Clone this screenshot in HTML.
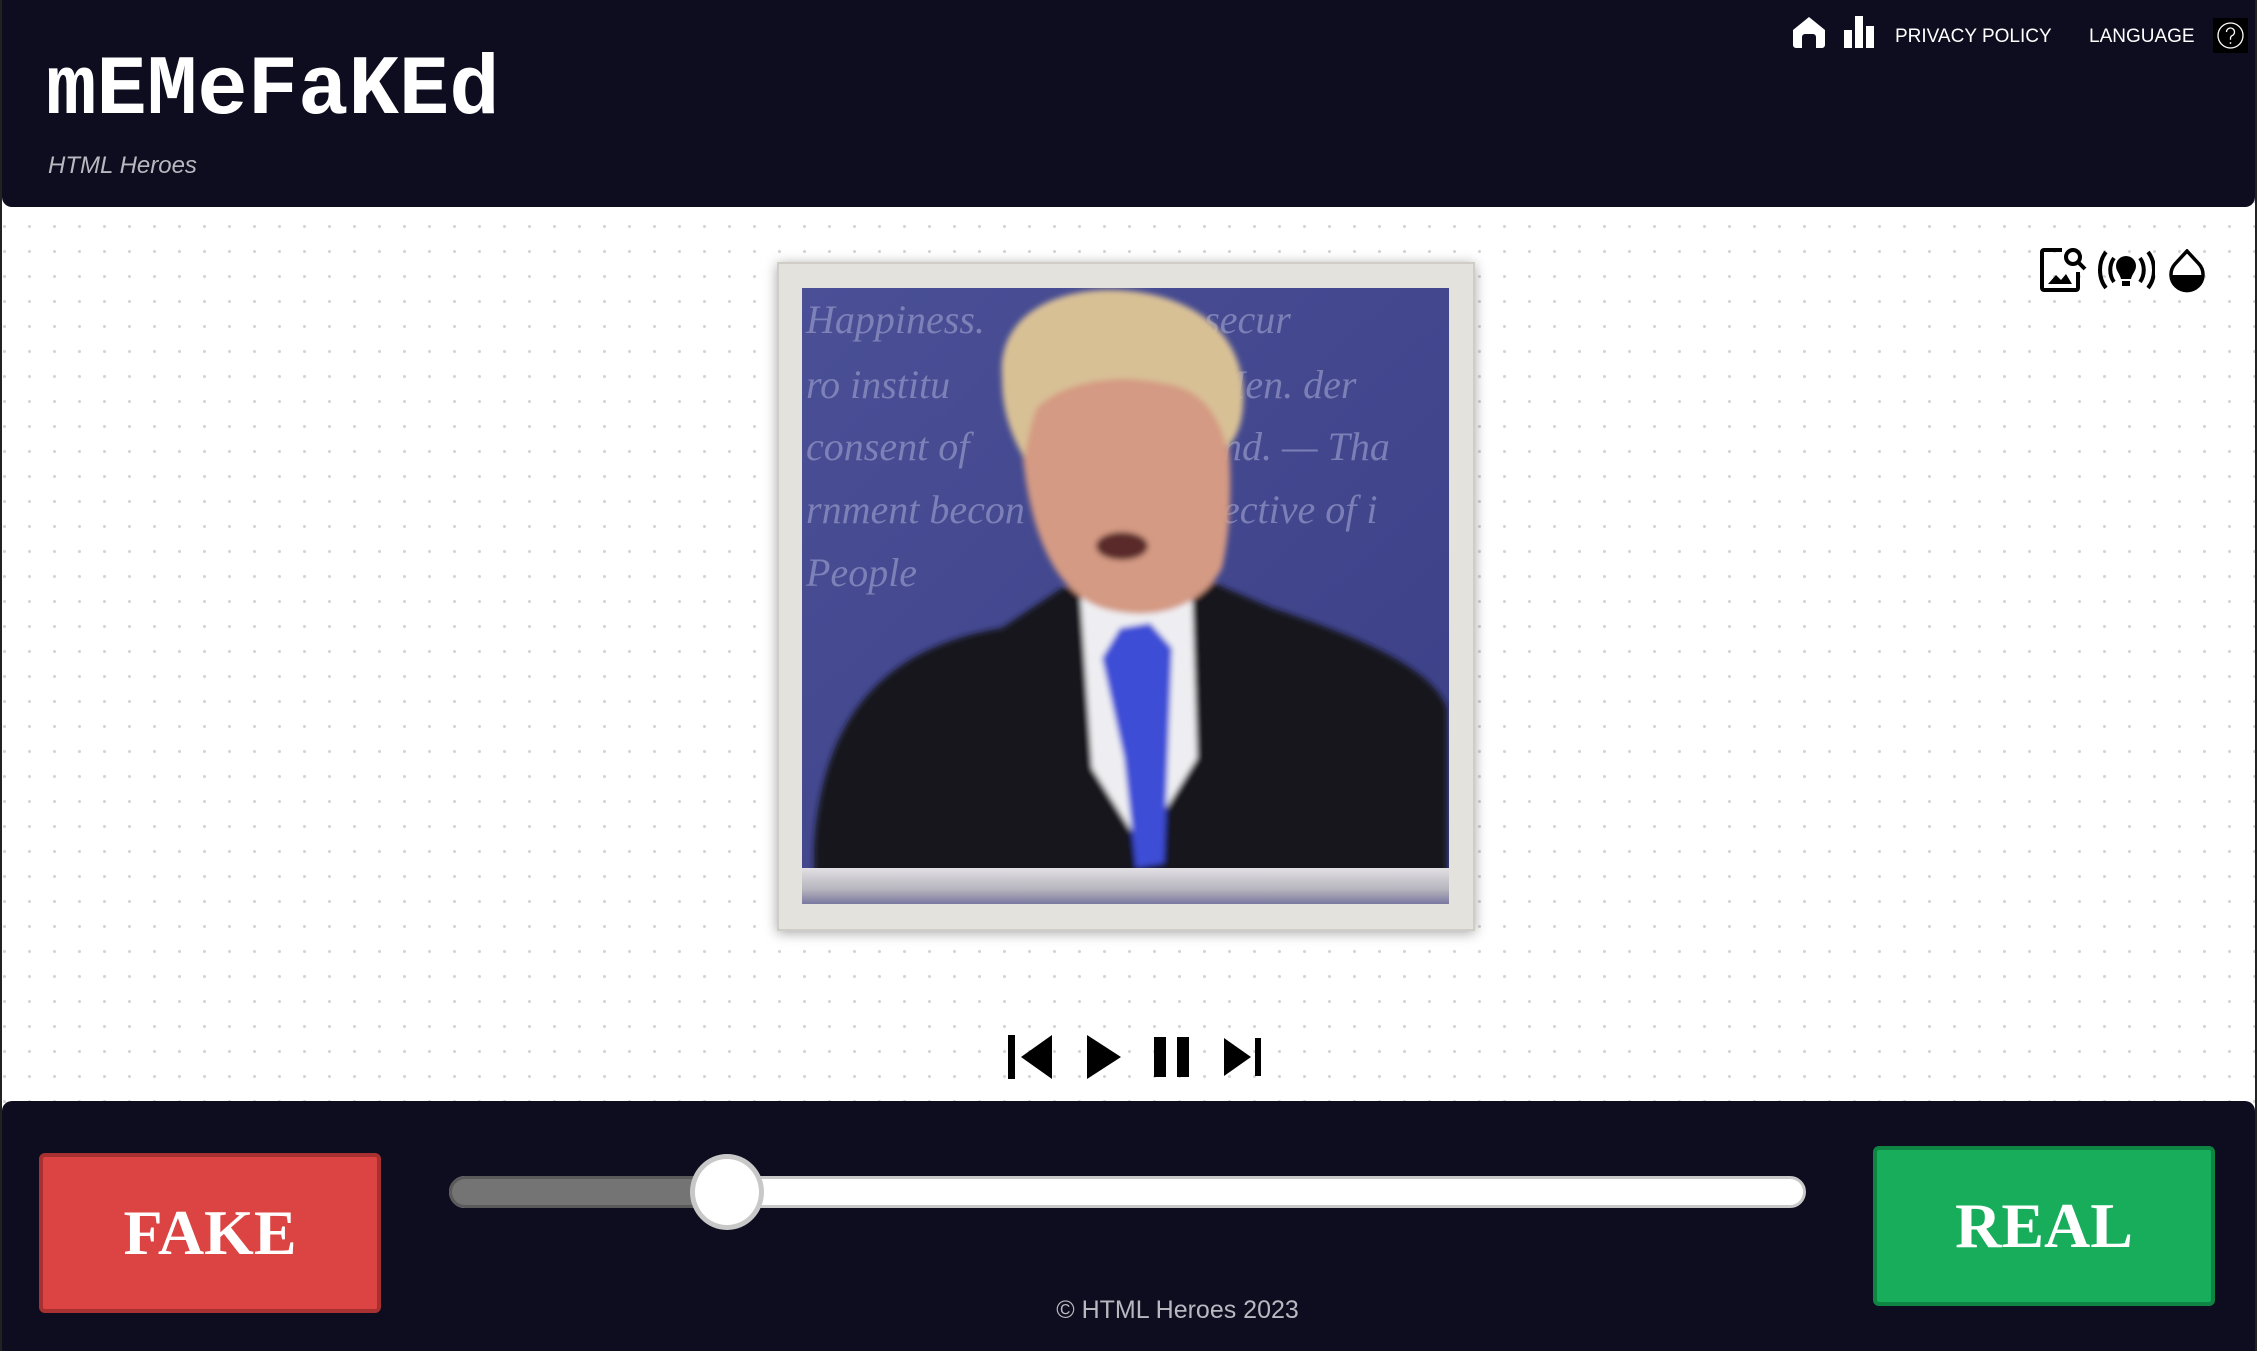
<!DOCTYPE html>
<html><head><meta charset="utf-8"><style>
*{margin:0;padding:0;box-sizing:border-box}
html,body{width:2257px;height:1351px;overflow:hidden;background:#fff;font-family:"Liberation Sans",sans-serif}
.main{position:absolute;left:0;top:0;width:2257px;height:1351px;border-left:2px solid #222;border-right:2px solid #222;
background-color:#fff;background-image:radial-gradient(circle,#d4d4d4 1.3px,transparent 1.8px);background-size:25px 25px;background-position:-10px -11px}
header{position:absolute;left:2px;top:0;width:2253px;height:207px;background:#0d0d1f;border-radius:0 0 10px 10px}
.title{position:absolute;left:44px;top:44px;font-family:"Liberation Mono",monospace;font-weight:bold;font-size:84px;color:#fff;letter-spacing:0}
.sub{position:absolute;left:46px;top:152px;font-style:italic;font-size:24px;color:#b8b8c0}
.nav{position:absolute;top:26px;font-size:19px;color:#fff;letter-spacing:0}
footer{position:absolute;left:2px;top:1101px;width:2253px;height:250px;background:#0d0d1f;border-radius:10px 10px 0 0}
.btn{position:absolute;font-family:"Liberation Serif",serif;font-weight:bold;color:#fff;font-size:64px;display:flex;align-items:center;justify-content:center;border-radius:6px}
.fake{left:39px;top:1153px;width:342px;height:160px;background:#dc4343;border:4px solid #a93030}
.real{left:1873px;top:1146px;width:342px;height:160px;background:#17ad5a;border:4px solid #0f8543}
.track{position:absolute;left:449px;top:1176px;width:1357px;height:32px;border-radius:16px;background:#fff;border:3px solid #c8c8c8}
.fill{position:absolute;left:449px;top:1176px;width:290px;height:32px;border-radius:16px 0 0 16px;background:#747474;border:3px solid #5a5a5a;border-right:none}
.thumb{position:absolute;left:690px;top:1154px;width:74px;height:76px;border-radius:50%;background:#fff;border:5px solid #c8c8c8}
.copy{position:absolute;left:1055px;width:245px;text-align:center;top:1296px;font-size:25px;color:#b8b8c0;white-space:nowrap}
.frame{position:absolute;left:777px;top:262px;width:698px;height:669px;background:#e4e2dc;border:2px solid #cfcdc6;box-shadow:0 2px 12px rgba(0,0,0,.35)}
</style></head><body>
<div class="main"></div>
<header>
<div class="title">mEMeFaKEd</div>
<div class="sub">HTML Heroes</div>
<svg style="position:absolute;left:1790px;top:16px" width="34" height="32" viewBox="0 0 34 32"><path d="M17 1 L33 14 V29 a3 3 0 0 1-3 3 H24 V21 a3 3 0 0 0-3-3 H13 a3 3 0 0 0-3 3 V32 H4 a3 3 0 0 1-3-3 V14 Z" fill="#fff"/></svg>
<svg style="position:absolute;left:1842px;top:16px" width="30" height="32" viewBox="0 0 30 32"><rect x="0" y="14" width="8" height="18" fill="#fff"/><rect x="11" y="0" width="8" height="32" fill="#fff"/><rect x="22" y="10" width="8" height="22" fill="#fff"/></svg>
<div class="nav" style="left:1893px">PRIVACY POLICY</div>
<div class="nav" style="left:2087px">LANGUAGE</div>
<div style="position:absolute;left:2211px;top:18px;width:35px;height:35px;background:#000"></div>
<svg style="position:absolute;left:2215px;top:22px" width="27" height="27" viewBox="0 0 27 27"><circle cx="13.5" cy="13.5" r="12.5" fill="none" stroke="#fff" stroke-width="1.3"/><path d="M9.5 10 a4 4 0 1 1 5.5 3.7 c-1 .5-1.5 1.2-1.5 2.5 v1.5" fill="none" stroke="#fff" stroke-width="1.3"/><circle cx="13.5" cy="21" r=".9" fill="#fff"/></svg>
</header>
<svg style="position:absolute;left:2040px;top:244px" width="50" height="50" viewBox="0 0 50 50"><path d="M22 6 H4 a2 2 0 0 0-2 2 V44 a2 2 0 0 0 2 2 H36 a2 2 0 0 0 2-2 V28" fill="none" stroke="#000" stroke-width="4"/><path d="M8 40 L16 31 L21 36 L26 30 L32 40Z" fill="#000"/><circle cx="33" cy="13" r="7" fill="none" stroke="#000" stroke-width="4"/><path d="M38 18 L45 25" stroke="#000" stroke-width="4"/></svg>
<svg style="position:absolute;left:2097px;top:248px" width="58" height="44" viewBox="0 0 58 44"><path d="M9 4 C1 14 1 30 9 40 M51 4 C59 14 59 30 51 40" fill="none" stroke="#000" stroke-width="4"/><path d="M17 10 C12 17 12 27 17 34 M43 10 C48 17 48 27 43 34" fill="none" stroke="#000" stroke-width="4"/><path d="M29 8 a10 10 0 0 1 10 10 c0 5-4 8-5 13 H24 c-1-5-5-8-5-13 a10 10 0 0 1 10-10Z" fill="#000"/><rect x="25" y="33" width="8" height="5" fill="#000"/></svg>
<svg style="position:absolute;left:2169px;top:249px" width="36" height="44" viewBox="0 0 36 44"><path d="M18 2 L30 15 a16 16 0 1 1-24 0Z" fill="none" stroke="#000" stroke-width="3.5"/><path d="M2 26 H34 a16 16 0 0 1-32 0Z" fill="#000"/></svg>
<div class="frame"></div>
<svg style="position:absolute;left:802px;top:288px" width="647" height="616" viewBox="0 0 647 616">
<defs><linearGradient id="bg" x1="0" y1="0" x2="1" y2="1"><stop offset="0" stop-color="#4a4f96"/><stop offset="1" stop-color="#3b3f86"/></linearGradient>
<linearGradient id="pod" x1="0" y1="0" x2="0" y2="1"><stop offset="0" stop-color="#e2e0e4"/><stop offset=".6" stop-color="#b6b4bc"/><stop offset="1" stop-color="#7a78a0"/></linearGradient>
<filter id="bl"><feGaussianBlur stdDeviation="3"/></filter></defs>
<rect width="647" height="616" fill="url(#bg)"/>
<g font-family="Liberation Serif,serif" font-style="italic" font-size="40" fill="#8f93c4" opacity=".75">
<text x="4" y="45">Happiness.</text><text x="320" y="45">ut  to  secur</text>
<text x="4" y="110">ro  institu</text><text x="410" y="110">Men.  der</text>
<text x="4" y="172">consent  of</text><text x="420" y="172">nd.  —  Tha</text>
<text x="4" y="235">rnment  becon</text><text x="420" y="235">ective  of  i</text>
<text x="4" y="298">People</text></g>
<g filter="url(#bl)">
<path d="M12 560 C20 430 80 360 200 340 L260 300 L400 290 L470 320 C560 350 630 380 645 420 V600 H12Z" fill="#15141a"/>
<path d="M278 300 L330 290 L390 300 L395 470 L340 560 L290 480Z" fill="#eeeef2"/>
<path d="M318 340 L348 335 L370 360 L362 575 L334 580 L322 470 L300 370Z" fill="#3e4ed6"/>
<path d="M218 110 C218 210 240 300 300 320 C350 335 400 320 420 280 C432 230 430 150 420 110 C380 80 260 80 218 110Z" fill="#d49a83"/>
<path d="M200 90 C195 35 240 5 300 2 C370 0 430 30 440 90 C445 130 435 150 425 160 C415 120 395 100 360 95 C310 85 260 95 235 120 C228 135 225 160 222 170 C205 140 200 115 200 90Z" fill="#d8c095"/>
<ellipse cx="320" cy="258" rx="26" ry="14" fill="#5a2a2a"/>
</g>
<rect x="0" y="580" width="647" height="36" fill="url(#pod)"/>
</svg>
<svg style="position:absolute;left:1005px;top:1033px" width="260" height="50" viewBox="1005 1033 260 50">
<rect x="1008" y="1035" width="7" height="44" fill="#000"/><path d="M1052 1035 V1079 L1021 1057Z" fill="#000"/>
<path d="M1087 1035 V1079 L1121 1057Z" fill="#000"/>
<rect x="1154" y="1037" width="12" height="40" fill="#000"/><rect x="1177" y="1037" width="12" height="40" fill="#000"/>
<path d="M1224 1038 V1076 L1251 1057Z" fill="#000"/><rect x="1255" y="1038" width="6" height="38" fill="#000"/>
</svg>
<footer></footer>
<div class="btn fake">FAKE</div>
<div class="btn real">REAL</div>
<div class="track"></div>
<div class="fill"></div>
<div class="thumb"></div>
<div class="copy">© HTML Heroes 2023</div>
</body></html>
